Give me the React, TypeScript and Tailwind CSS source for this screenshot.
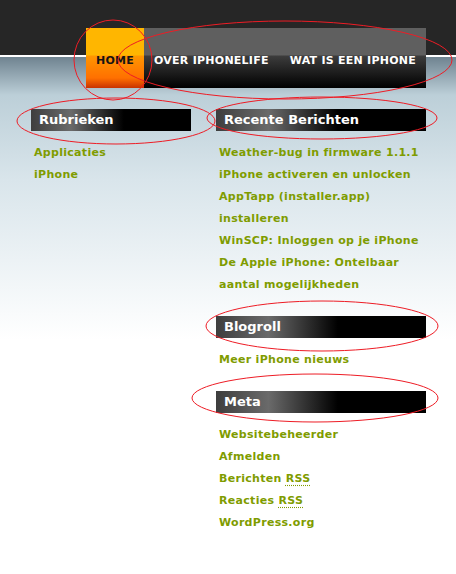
import { memo } from "react";

const font = { fontFamily: '"DejaVu Sans", Verdana, sans-serif' };

const Heading = memo(function Heading({ title }: { title: string }) {
  return (
    <div className="h-[22px] pl-[8px] flex items-center text-[13px] font-bold text-white bg-[linear-gradient(to_right,#3e3e3e_0%,#6a6a6a_25%,#000_58%,#000_100%)]">
      {title}
    </div>
  );
});

const LinkList = memo(function LinkList({ items }: { items: React.ReactNode[] }) {
  return (
    <ul className="mt-[11px] mb-[20px] pl-[3px] text-[11px] leading-[22px] tracking-[0.3px] font-bold text-[#7f9c00]">
      {items.map((item, i) => (
        <li key={i}>{item}</li>
      ))}
    </ul>
  );
});

const Rss = () => <span className="underline decoration-dotted underline-offset-[3px]">RSS</span>;

function Annotations() {
  return (
    <svg className="absolute inset-0 pointer-events-none" width="456" height="574" fill="none" stroke="#ee1c25" strokeWidth="1">
      <ellipse cx="113" cy="60" rx="39" ry="40" />
      <ellipse cx="285" cy="60" rx="167" ry="39" />
      <ellipse cx="116" cy="121" rx="99" ry="23" />
      <ellipse cx="322" cy="118" rx="115" ry="21" />
      <ellipse cx="322" cy="326" rx="116" ry="25" />
      <ellipse cx="315" cy="398" rx="123" ry="24" />
    </svg>
  );
}

export default function App() {
  return (
    <div
      style={font}
      className="relative w-[456px] h-[574px] overflow-hidden pt-[28px] bg-[linear-gradient(to_bottom,#262626_0px,#262626_55px,#ffffff_55px,#ffffff_57px,#6f8390_57px,#bccfd8_95px,#d9e5eb_180px,#ffffff_340px)]"
    >
      <nav className="ml-[86px] flex h-[60px] w-[340px] text-[11px] tracking-[0.25px] font-bold uppercase">
        <a className="px-[10px] flex items-center pt-[6px] text-[#141414] bg-[linear-gradient(to_bottom,#ffb600_0px,#ffb600_27px,#ff9600_28px,#ff7000_50px,#c83200_60px)]">
          Home
        </a>
        <div className="flex-1 flex items-center pt-[6px] text-white bg-[linear-gradient(to_bottom,#5f5f5f_0px,#5f5f5f_27px,#3c3c3c_28px,#000_60px)]">
          <a className="px-[10px]">Over iPhonelife</a>
          <a className="px-[10px] ml-auto">Wat is een iPhone</a>
        </div>
      </nav>

      <div className="mt-[21px] flex gap-[25px] pl-[31px]">
        <div className="w-[160px]">
          <Heading title="Rubrieken" />
          <LinkList items={["Applicaties", "iPhone"]} />
        </div>
        <div className="w-[210px]">
          <Heading title="Recente Berichten" />
          <LinkList
            items={[
              "Weather-bug in firmware 1.1.1",
              "iPhone activeren en unlocken",
              "AppTapp (installer.app) installeren",
              "WinSCP: Inloggen op je iPhone",
              "De Apple iPhone: Ontelbaar aantal mogelijkheden",
            ]}
          />
          <Heading title="Blogroll" />
          <LinkList items={["Meer iPhone nieuws"]} />
          <Heading title="Meta" />
          <LinkList
            items={[
              "Websitebeheerder",
              "Afmelden",
              <>Berichten <Rss /></>,
              <>Reacties <Rss /></>,
              "WordPress.org",
            ]}
          />
        </div>
      </div>

      <Annotations />
    </div>
  );
}
